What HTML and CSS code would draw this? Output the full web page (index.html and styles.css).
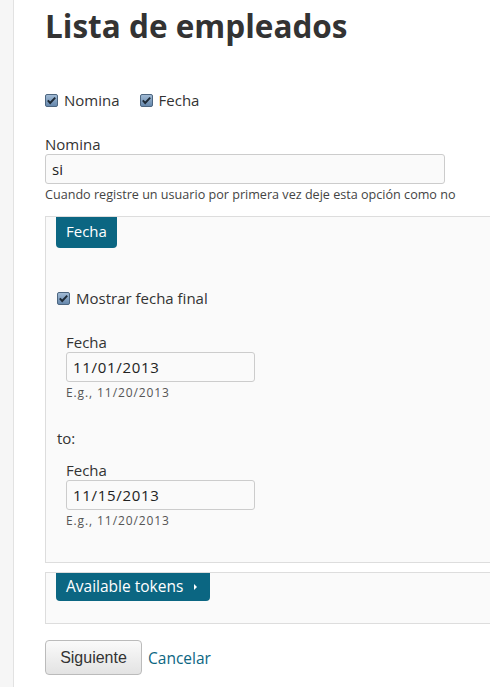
FILE: index.html
```html
<!DOCTYPE html>
<html lang="es">
<head>
<meta charset="utf-8">
<title>Lista de empleados</title>
<link rel="stylesheet" href="styles.css">
</head>
<body>
<div class="page">
  <div class="rail"></div>
  <main class="main">
    <h1 class="title">Lista de empleados</h1>

    <div class="checks">
      <label class="check"><svg class="cb" viewBox="0 0 13 13" width="13" height="13"><defs><linearGradient id="g1" x1="0" y1="0" x2="0" y2="1"><stop offset="0" stop-color="#a3bcd6"/><stop offset="1" stop-color="#6486ab"/></linearGradient></defs><rect x="0.5" y="0.5" width="12" height="12" rx="1.5" fill="url(#g1)" stroke="#4d6680"/><path d="M2.8 6.3 L5.2 9 L10.2 3.6" fill="none" stroke="#1e2a36" stroke-width="1.9"/></svg>Nomina</label>
      <label class="check"><svg class="cb" viewBox="0 0 13 13" width="13" height="13"><rect x="0.5" y="0.5" width="12" height="12" rx="1.5" fill="url(#g1)" stroke="#4d6680"/><path d="M2.8 6.3 L5.2 9 L10.2 3.6" fill="none" stroke="#1e2a36" stroke-width="1.9"/></svg>Fecha</label>
    </div>

    <div class="field">
      <label class="label">Nomina</label>
      <div class="input wide">si</div>
      <div class="desc">Cuando registre un usuario por primera vez deje esta opción como no</div>
    </div>

    <fieldset class="box">
      <legend class="legend">Fecha</legend>
      <div class="boxbody">
        <label class="check show"><svg class="cb" viewBox="0 0 13 13" width="13" height="13"><rect x="0.5" y="0.5" width="12" height="12" rx="1.5" fill="url(#g1)" stroke="#4d6680"/><path d="M2.8 6.3 L5.2 9 L10.2 3.6" fill="none" stroke="#1e2a36" stroke-width="1.9"/></svg>Mostrar fecha final</label>

        <div class="datefield">
          <label class="label">Fecha</label>
          <div class="input date">11/01/2013</div>
          <div class="hint">E.g., 11/20/2013</div>
        </div>

        <div class="to">to:</div>

        <div class="datefield second">
          <label class="label">Fecha</label>
          <div class="input date">11/15/2013</div>
          <div class="hint">E.g., 11/20/2013</div>
        </div>
      </div>
    </fieldset>

    <fieldset class="box tokens">
      <legend class="legend">Available tokens <span class="arrow"></span></legend>
    </fieldset>

    <div class="actions">
      <button class="btn" type="button">Siguiente</button>
      <a class="link" href="#">Cancelar</a>
    </div>
  </main>
</div>
</body>
</html>
```
FILE: styles.css
```css
html, body {
  margin: 0;
  padding: 0;
  background: #fff;
  overflow: hidden;
}
body {
  font-family: "Open Sans", "DejaVu Sans", sans-serif;
  color: #333;
}
.page {
  display: flex;
  min-height: 687px;
}
.rail {
  width: 13px;
  flex: 0 0 13px;
  background: #f6f6f6;
  border-right: 1px solid #e2e2e2;
}
.main {
  padding-left: 31px;
  width: 520px;
  flex: 0 0 520px;
}
.title {
  margin: 0;
  padding-top: 4px;
  font-size: 31.5px;
  line-height: 44px;
  font-weight: 700;
  color: #333;
}
.checks {
  display: flex;
  gap: 20px;
  margin-top: 42px;
  font-size: 15px;
  line-height: 20px;
}
.check {
  display: flex;
  align-items: center;
  gap: 6px;
}
.cb {
  display: block;
  flex: none;
  margin-top: 1px;
}
.field {
  margin-top: 24px;
}
.label {
  display: block;
  font-size: 15px;
  line-height: 20px;
}
.input {
  box-sizing: border-box;
  height: 30px;
  border: 1px solid #ccc;
  border-radius: 3px;
  background: #fafafa;
  padding: 0 6px;
  font-size: 15px;
  line-height: 28px;
  color: #222;
}
.wide { width: 400px; }
.date {
  width: 189px;
  letter-spacing: 0.7px;
}
.desc {
  margin-top: 3px;
  font-size: 12.6px;
  line-height: 16px;
  color: #444;
}
.box {
  margin: 13px 0 0 0;
  padding: 0;
  border: 1px solid #ddd;
  background: #fafafa;
  min-width: 0;
  width: 500px;
  box-sizing: border-box;
}
.legend {
  margin-left: 10px;
  padding: 0 10px;
  height: 31px;
  line-height: 29px;
  background: #0b6682;
  color: #fff;
  font-size: 15px;
  border-radius: 0 0 4px 4px;
  float: left;
}
.boxbody {
  clear: both;
  padding: 40px 0 34px 11px;
}
.show { font-size: 15px; line-height: 20px; }
.datefield {
  margin-top: 24px;
  margin-left: 9px;
}
.datefield.second {
  margin-top: 12px;
}
.hint {
  margin-top: 4px;
  font-size: 12px;
  line-height: 14px;
  letter-spacing: 0.9px;
  color: #555;
}
.to {
  margin-top: 28px;
  font-size: 15px;
  line-height: 20px;
}
.tokens {
  margin-top: 9px;
  height: 52px;
}
.tokens .legend {
  height: 28px;
  line-height: 27px;
  font-size: 15.5px;
  padding-right: 13px;
}
.arrow {
  display: inline-block;
  width: 0;
  height: 0;
  border-left: 3px solid #fff;
  border-top: 3px solid transparent;
  border-bottom: 3px solid transparent;
  margin-left: 7px;
  vertical-align: 2px;
}
.actions {
  display: flex;
  align-items: center;
  gap: 6px;
  margin-top: 16px;
}
.btn {
  box-sizing: border-box;
  width: 97px;
  height: 35px;
  border: 1px solid #bbb;
  border-radius: 4px;
  background: linear-gradient(#fafafa, #e3e3e3);
  font-family: "Liberation Sans", Arial, sans-serif;
  font-size: 16px;
  color: #333;
  padding: 0;
}
.link {
  font-size: 15.5px;
  color: #0b6682;
  text-decoration: none;
}
```
